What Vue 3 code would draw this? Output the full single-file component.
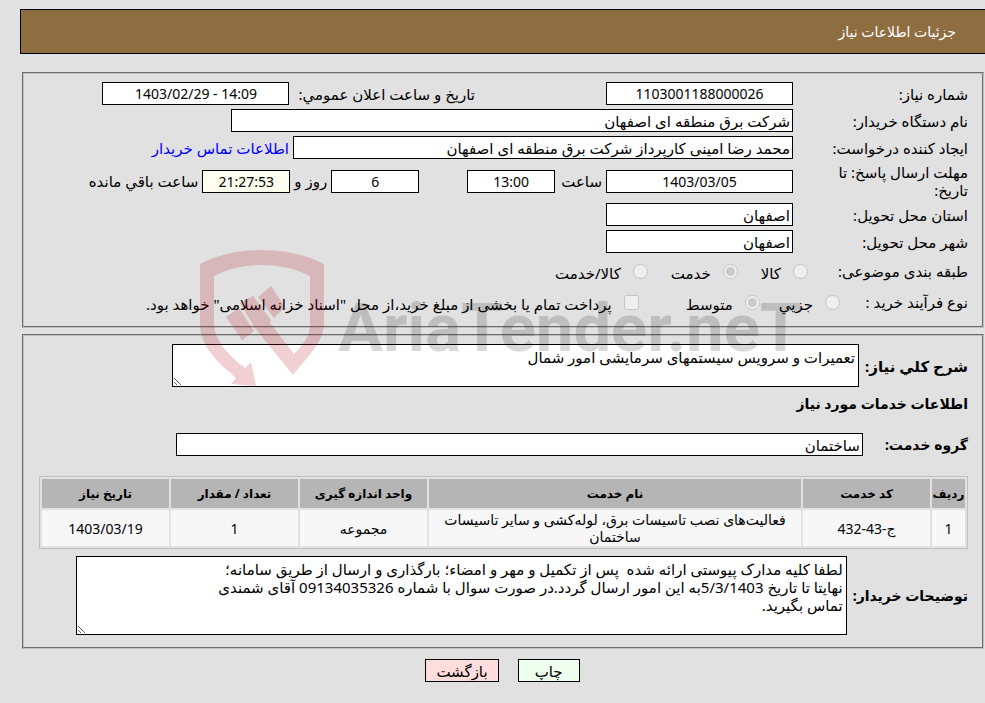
<template>
    <div class="page" dir="rtl">
        <header class="title-bar">جزئیات اطلاعات نیاز</header>

        <main class="panels">
            <section class="panel details">
                <div class="row">
                    <label class="label" for="number">شماره نیاز:</label>
                    <input id="number" class="field short center" :value="need.number" readonly>
                    <label class="announce" for="announce">تاريخ و ساعت اعلان عمومي:</label>
                    <input id="announce" class="field short center" dir="ltr" :value="need.announce" readonly>
                </div>
                <div class="row">
                    <label class="label" for="buyer">نام دستگاه خریدار:</label>
                    <input id="buyer" class="field long" :value="need.buyer" readonly>
                </div>
                <div class="row">
                    <label class="label" for="creator">ایجاد کننده درخواست:</label>
                    <input id="creator" class="field medium" :value="need.creator" readonly>
                    <a class="contact" href="#">اطلاعات تماس خریدار</a>
                </div>
                <div class="row deadline">
                    <label class="label" for="deadline">مهلت ارسال پاسخ: تا تاریخ:</label>
                    <input id="deadline" class="field short center" :value="need.deadline" readonly>
                    <label class="gap hour" for="hour">ساعت</label>
                    <input id="hour" class="field tiny center" :value="need.hour" readonly>
                    <input id="days" class="field tiny center days" aria-label="روز" :value="need.days" readonly>
                    <label class="gap" for="remain">روز و</label>
                    <input id="remain" class="field tiny center remain" :value="need.remain" readonly>
                    <span class="gap">ساعت باقي مانده</span>
                </div>
                <div class="row">
                    <label class="label" for="province">استان محل تحویل:</label>
                    <input id="province" class="field short" :value="need.province" readonly>
                </div>
                <div class="row">
                    <label class="label" for="city">شهر محل تحویل:</label>
                    <input id="city" class="field short" :value="need.city" readonly>
                </div>
                <div class="row options">
                    <span class="label">طبقه بندی موضوعی:</span>
                    <label v-for="item in subjects" :key="item.text" class="option">
                        <input type="radio" name="subject" :checked="item.checked" disabled>{{ item.text }}
                    </label>
                </div>
                <div class="row options process">
                    <span class="label">نوع فرآیند خرید :</span>
                    <label v-for="item in processes" :key="item.text" class="option">
                        <input type="radio" name="process" :checked="item.checked" disabled>{{ item.text }}
                    </label>
                    <label class="option treasury">
                        <input type="checkbox" disabled>پرداخت تمام یا بخشی از مبلغ خرید،از محل "اسناد خزانه اسلامی" خواهد بود.
                    </label>
                </div>
            </section>

            <section class="panel request">
                <div class="block">
                    <label class="heading summary-label" for="summary">شرح کلي نیاز:</label>
                    <textarea id="summary" class="area summary" :value="need.summary" readonly></textarea>
                </div>
                <h2 class="heading services">اطلاعات خدمات مورد نیاز</h2>
                <div class="block group">
                    <label class="heading" for="group">گروه خدمت:</label>
                    <input id="group" class="field wide" :value="need.group" readonly>
                </div>
                <table class="items">
                    <thead>
                        <tr>
                            <th class="col-row">ردیف</th>
                            <th class="col">کد خدمت</th>
                            <th>نام خدمت</th>
                            <th class="col">واحد اندازه گیری</th>
                            <th class="col">تعداد / مقدار</th>
                            <th class="col">تاریخ نیاز</th>
                        </tr>
                    </thead>
                    <tbody>
                        <tr v-for="item in items" :key="item.row">
                            <td>{{ item.row }}</td>
                            <td>{{ item.code }}</td>
                            <td>{{ item.name }}</td>
                            <td>{{ item.unit }}</td>
                            <td>{{ item.count }}</td>
                            <td>{{ item.date }}</td>
                        </tr>
                    </tbody>
                </table>
                <div class="block">
                    <label class="heading" for="notes">توضیحات خریدار:</label>
                    <textarea id="notes" class="area notes" :value="need.notes" readonly></textarea>
                </div>
            </section>
        </main>

        <div class="actions">
            <button type="button" class="btn print">چاپ</button>
            <button type="button" class="btn back">بازگشت</button>
        </div>

        <svg class="watermark" viewBox="0 0 610 150" width="610" height="150" direction="ltr" aria-hidden="true">
            <g class="shield">
                <path
                    d="M5 19Q32 5 67 5T129 19V78C129 98 110 114 98 130L60 83L45 58L58 51L76 75L75 78L99 109C108 99 115 92 115 80V31Q94 20 67 20T19 31V78C19 97 36 112 50 123L56 117L61 141L36 139L41 133C24 118 5 103 5 78Z" />
                <path d="M31 72L44 63L59 86L47 95ZM63 52L76 41L90 62L79 73Z" />
            </g>
            <text x="143" y="106">AriaTender.neT</text>
        </svg>
    </div>
</template>

<script setup>
const need = {
    number: '1103001188000026',
    announce: '1403/02/29 - 14:09',
    buyer: 'شرکت برق منطقه ای اصفهان',
    creator: 'محمد رضا امینی کارپرداز شرکت برق منطقه ای اصفهان',
    deadline: '1403/03/05',
    hour: '13:00',
    days: '6',
    remain: '21:27:53',
    province: 'اصفهان',
    city: 'اصفهان',
    summary: 'تعمیرات و سرویس سیستمهای سرمایشی امور شمال',
    group: 'ساختمان',
    notes: 'لطفا کلیه مدارک پیوستی ارائه شده  پس از تکمیل و مهر و امضاء؛ بارگذاری و ارسال از طریق سامانه؛\nنهایتا تا تاریخ 5/3/1403به این امور ارسال گردد.در صورت سوال با شماره 09134035326 آقای شمندی\nتماس بگیرید.'
}

const subjects = [
    { text: 'کالا', checked: false },
    { text: 'خدمت', checked: true },
    { text: 'کالا/خدمت', checked: false }
]

const processes = [
    { text: 'جزيي', checked: false },
    { text: 'متوسط', checked: true }
]

const items = [
    {
        row: 1,
        code: 'ج-43-432',
        name: 'فعالیت‌های نصب تاسیسات برق، لوله‌کشی و سایر تاسیسات ساختمان',
        unit: 'مجموعه',
        count: 1,
        date: '1403/03/19'
    }
]
</script>

<style>
body {
    margin: 0;
    background: #e1e1e1;
}
</style>

<style scoped>
.page {
    position: relative;
    padding-top: 9px;
    font-family: "Noto Sans", "DejaVu Sans", sans-serif;
    font-size: 15px;
    line-height: 18px;
    color: #000;
}

.page * {
    box-sizing: border-box;
}

.title-bar {
    margin-left: 20px;
    padding: 12px 29px;
    border: 1px solid #000;
    border-right: 0;
    background: #8e6d40;
    color: #fff;
    font-size: 14px;
    line-height: 19px;
}

.panels {
    display: flex;
    flex-direction: column;
    gap: 6px;
    margin: 18px 1px 0 22px;
}

.panel {
    padding: 8px 14px 12px 15px;
    border: 2px groove #c0c0c0;
}

.details {
    padding-top: 6px;
    padding-bottom: 9px;
}

.row {
    display: flex;
    align-items: center;
    min-height: 27px;
}

.label {
    flex: none;
    width: 175px;
    padding-left: 36px;
}

.field {
    height: 23px;
    padding: 0 2px;
    border: 1px solid #000;
    border-radius: 0;
    background: #fff;
    font: inherit;
    color: #000;
}

.short {
    width: 187px;
}

.medium {
    width: 500px;
}

.long {
    width: 562px;
}

.tiny {
    width: 88px;
}

.center {
    text-align: center;
    font-size: 14px;
}

.announce {
    margin-right: 131px;
    padding-left: 9px;
}

.contact {
    margin-right: 4px;
    color: #00f;
    text-decoration: none;
}

.deadline {
    min-height: 40px;
}

.gap {
    padding: 0 4px;
}

.hour {
    padding-left: 6px;
}

.days {
    margin-right: 48px;
}

.remain {
    background: #fffff0;
}

.options {
    min-height: 31px;
}

.options .label {
    width: 160px;
    padding-left: 0;
}

.process .label {
    width: 128px;
}

.option {
    display: flex;
    gap: 12px;
    margin-left: 23px;
    padding-top: 4px;
}

.process .option {
    margin-left: 19px;
}

.process .treasury {
    margin-right: 28px;
    margin-left: 0;
}

.option input {
    flex: none;
    width: 15px;
    height: 15px;
    margin: 0;
}

.block {
    display: flex;
    align-items: center;
    gap: 6px;
}

.heading {
    flex: none;
    margin: 0;
    font-size: 14px;
    font-weight: bold;
}

.summary-label {
    font-size: 15px;
}

.area {
    display: block;
    padding: 3px;
    border: 1px solid #000;
    background: #fff;
    font: inherit;
    color: #000;
}

.summary {
    width: 687px;
    height: 43px;
}

.services {
    margin: 8px 0 20px;
}

.wide {
    width: 687px;
}

.group {
    gap: 22px;
}

.items {
    width: 100%;
    margin: 20px 0 7px;
    border: 1px solid #c0c0c0;
    border-spacing: 2px;
    table-layout: fixed;
    text-align: center;
    font-size: 14px;
    line-height: 17px;
}

.items th {
    height: 29px;
    padding: 0;
    background: #b5b5b5;
    font-size: 12px;
}

.items td {
    height: 36px;
    padding: 1px 10px;
    background: #f7f7f7;
}

.col-row {
    width: 33px;
}

.col {
    width: 127px;
}

.notes {
    width: 771px;
    height: 79px;
}

.actions {
    display: flex;
    justify-content: center;
    gap: 19px;
    margin: 10px 0 0 20px;
}

.btn {
    height: 23px;
    padding: 0 10px;
    border: 1px solid #000;
    font: inherit;
    color: #000;
}

.print {
    min-width: 62px;
    background: #efe;
}

.back {
    background: #fdd;
}

.watermark {
    position: absolute;
    top: 245px;
    left: 195px;
    pointer-events: none;
}

.shield {
    fill: #b00010;
    opacity: 0.18;
}

.watermark text {
    font-family: Roboto, sans-serif;
    font-size: 67px;
    font-weight: bold;
    fill: #000;
    opacity: 0.15;
}
</style>
